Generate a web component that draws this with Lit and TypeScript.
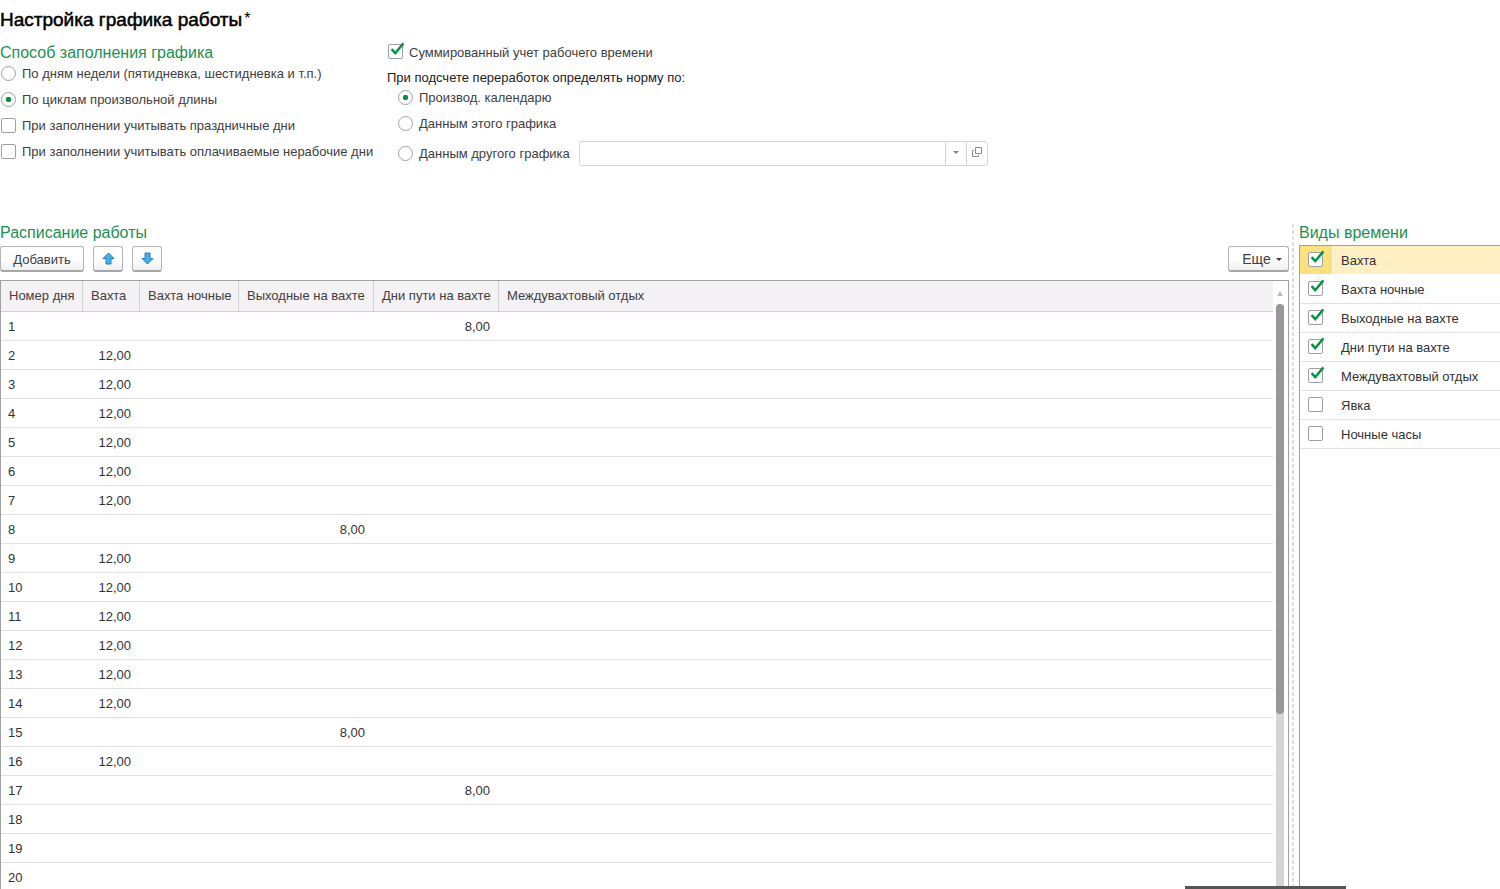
import { LitElement, html, css, svg } from "lit";
import { customElement, property } from "lit/decorators.js";

const controls = css`
  * {
    box-sizing: border-box;
  }
  button,
  input {
    font: inherit;
    color: inherit;
    margin: 0;
  }
`;

@customElement("tick-box")
class TickBox extends LitElement {
  @property({ type: Boolean }) checked = false;
  @property() label = "";
  @property({ type: Boolean }) wide = false;

  static styles = [
    controls,
    css`
      :host {
        display: block;
      }
      .line {
        display: flex;
        align-items: center;
        gap: 6px;
        white-space: nowrap;
      }
      .line.wide {
        gap: 18px;
      }
      .holder {
        position: relative;
        display: flex;
        margin-bottom: 2px;
      }
      .box {
        appearance: none;
        width: 15px;
        height: 15px;
        border: 1px solid #a0a0a0;
        border-radius: 2px;
        background: #fff;
      }
      .mark {
        position: absolute;
        left: 1px;
        top: -2px;
        display: none;
        pointer-events: none;
      }
      .box:checked + .mark {
        display: block;
      }
    `,
  ];

  render() {
    return html`<label class="line ${this.wide ? "wide" : ""}">
      <span class="holder">
        <input class="box" type="checkbox" .checked=${this.checked} />
        <svg class="mark" width="16" height="15" viewBox="0 0 16 15">
          <path d="M2.6 7.2 L6.2 11.2 L14.4 1.4" fill="none" stroke="#009646" stroke-width="2.5" />
        </svg>
      </span>
      <span>${this.label}</span>
    </label>`;
  }
}

interface Day {
  n: number;
  col?: number;
  hours?: string;
}

const COLUMNS = ["Вахта", "Вахта ночные", "Выходные на вахте", "Дни пути на вахте", "Междувахтовый отдых"];

const DAYS: Day[] = Array.from({ length: 20 }, (_, i) => {
  const n = i + 1;
  if (n === 1 || n === 17) return { n, col: 3, hours: "8,00" };
  if (n === 8 || n === 15) return { n, col: 2, hours: "8,00" };
  if (n > 17) return { n };
  return { n, col: 0, hours: "12,00" };
});

const KINDS = [
  { name: "Вахта", on: true },
  { name: "Вахта ночные", on: true },
  { name: "Выходные на вахте", on: true },
  { name: "Дни пути на вахте", on: true },
  { name: "Междувахтовый отдых", on: true },
  { name: "Явка", on: false },
  { name: "Ночные часы", on: false },
];

const arrow = svg`<path d="M6.5 1 L12 6.5 H9 V12 H4 V6.5 H1 Z" fill="#3fb0ec" stroke="#2b7fb4" stroke-width="1" stroke-linejoin="round"/>`;

@customElement("app-root")
class AppRoot extends LitElement {
  static styles = [
    controls,
    css`
      :host {
        display: flex;
        flex-direction: column;
        height: 100vh;
        overflow: hidden;
        background: #fff;
        color: #404040;
        font: 13px/16px "Liberation Sans", Arial, sans-serif;
      }
      h1 {
        display: flex;
        gap: 2px;
        margin: 0;
        padding-top: 9px;
        font-size: 19px;
        line-height: 22px;
        font-weight: 400;
        color: #000;
      }
      .title {
        -webkit-text-stroke: 0.5px #000;
      }
      .star {
        font-size: 16px;
        line-height: 20px;
      }
      h2 {
        margin: 0;
        font-size: 16px;
        line-height: 18px;
        font-weight: 400;
        color: #1a9250;
      }
      .options {
        display: flex;
        flex: none;
        gap: 20px;
        padding: 12px 0 54px;
      }
      .fill {
        width: 367px;
        flex: none;
      }
      .opt {
        display: flex;
        align-items: center;
        height: 26px;
        gap: 6px;
        padding: 2px 0 0 1px;
        white-space: nowrap;
      }
      .fill h2 {
        padding-top: 1px;
        margin-bottom: -2px;
      }
      .radio {
        appearance: none;
        width: 15px;
        height: 15px;
        margin-bottom: 2px;
        border: 1px solid #a0a0a0;
        border-radius: 50%;
        background: #fff;
      }
      .radio:checked {
        background: radial-gradient(circle, #009646 2.5px, #fff 3px);
      }
      .norm {
        flex: 1;
        min-width: 0;
      }
      .total {
        padding: 1px 0 0 1px;
      }
      .caption {
        padding-top: 9px;
        color: #222;
        margin-bottom: -2px;
      }
      .norm .opt {
        padding-left: 11px;
      }
      .norm .other {
        height: 34px;
        gap: 9px;
        padding-top: 0;
      }
      .other label {
        display: flex;
        align-items: center;
        gap: 6px;
        padding-top: 2px;
      }
      .picker {
        display: flex;
        width: 409px;
        height: 25px;
        border: 1px solid #d4d4d4;
        border-radius: 3px;
      }
      .picker input {
        flex: 1;
        min-width: 0;
        border: 0;
        background: none;
      }
      .picker button {
        display: grid;
        place-items: center;
        width: 21px;
        padding: 0 0 2px;
        border: 0;
        border-left: 1px solid #d4d4d4;
        background: none;
      }
      .lower {
        display: flex;
        flex: 1;
        min-height: 0;
      }
      .schedule {
        display: flex;
        flex-direction: column;
        flex: 1;
        min-width: 0;
      }
      .bar {
        display: flex;
        gap: 9px;
        padding: 4px 0 8px;
      }
      .btn {
        display: flex;
        align-items: center;
        justify-content: center;
        height: 26px;
        min-width: 30px;
        padding: 0;
        border: 1px solid #b4b4b4;
        border-bottom: 2px solid #a6a6a6;
        border-radius: 3px;
        background: linear-gradient(#fff 50%, #f0f0f0);
      }
      .add {
        width: 84px;
        padding-top: 2px;
      }
      .more {
        width: 61px;
        margin-left: auto;
        gap: 5px;
        padding: 1px 0 0 7px;
        font-size: 14px;
      }
      .frame {
        display: flex;
        flex: 1;
        min-height: 0;
        border: 1px solid #a0a0a0;
        border-bottom: 0;
        overflow: hidden;
      }
      .rows {
        flex: 1;
        min-width: 0;
        overflow: hidden;
      }
      table {
        width: 100%;
        table-layout: fixed;
        border-collapse: separate;
        border-spacing: 0;
      }
      th,
      td {
        padding: 0 8px;
        text-align: right;
        white-space: nowrap;
        border-bottom: 1px solid #e2e2e2;
      }
      th {
        height: 31px;
        font-weight: 400;
        text-align: left;
        background: #f5f2f5;
        border-bottom-color: #d2d2d2;
        border-right: 1px solid #d2d2d2;
      }
      th:last-child {
        border-right: 0;
      }
      td {
        height: 29px;
        padding: 2px 9px 0;
        color: #333;
      }
      td:first-child {
        text-align: left;
        padding-left: 7px;
      }
      .c0 {
        width: 82px;
      }
      .c1 {
        width: 57px;
      }
      .c2 {
        width: 99px;
      }
      .c3 {
        width: 135px;
      }
      .c4 {
        width: 125px;
      }
      .scroll {
        display: flex;
        flex-direction: column;
        align-items: center;
        width: 15px;
        padding: 10px 1px 0 0;
        gap: 8px;
      }
      .track {
        flex: 1;
        width: 8px;
        background: #d5d5d5;
        border-radius: 4px 4px 0 0;
      }
      .thumb {
        height: 70%;
        border-radius: 4px;
        background: #989698;
      }
      .split {
        width: 10px;
        display: flex;
        padding-left: 3px;
      }
      .dash {
        width: 2px;
        background: repeating-linear-gradient(#dedede 0 4px, transparent 4px 6px);
      }
      .kinds {
        display: flex;
        flex-direction: column;
        width: 201px;
      }
      .kinds ul {
        flex: 1;
        margin: 3px 0 0;
        padding: 0;
        list-style: none;
        border: 1px solid #a0a0a0;
        border-right: 0;
        border-bottom: 0;
      }
      .kinds li {
        height: 29px;
        padding: 6px 0 0 8px;
        color: #333;
        border-bottom: 1px solid #e2e2e2;
      }
      .kinds li.current {
        background: linear-gradient(90deg, #fce27c 32px, #fff8e0 32px 33px, #fff0c3 33px);
        border-bottom-color: #fff;
      }
      .panel {
        position: fixed;
        left: 79%;
        bottom: 0;
        width: 161px;
        height: 3px;
        background: #555;
      }
    `,
  ];

  render() {
    return html`
      <h1><span class="title">Настройка графика работы</span><span class="star">*</span></h1>
      <section class="options">
        <div class="fill">
          <h2>Способ заполнения графика</h2>
          <label class="opt"><input class="radio" type="radio" name="mode" />По дням недели (пятидневка, шестидневка и т.п.)</label>
          <label class="opt"><input class="radio" type="radio" name="mode" checked />По циклам произвольной длины</label>
          <tick-box class="opt" label="При заполнении учитывать праздничные дни"></tick-box>
          <tick-box class="opt" label="При заполнении учитывать оплачиваемые нерабочие дни"></tick-box>
        </div>
        <div class="norm">
          <tick-box class="total" checked label="Суммированный учет рабочего времени"></tick-box>
          <div class="caption">При подсчете переработок определять норму по:</div>
          <label class="opt"><input class="radio" type="radio" name="norm" checked />Производ. календарю</label>
          <label class="opt"><input class="radio" type="radio" name="norm" />Данным этого графика</label>
          <div class="opt other">
            <label><input class="radio" type="radio" name="norm" />Данным другого графика</label>
            <div class="picker">
              <input type="text" aria-label="Данным другого графика" />
              <button aria-label="Выбрать">
                <svg width="6" height="3"><path d="M0 0H6L3 3Z" fill="#888" /></svg>
              </button>
              <button aria-label="Открыть">
                <svg width="10" height="10" fill="none" stroke="#8c8c8c">
                  <path d="M3.5 .5H9.5V6.5H3.5ZM2 3.5H.5V9.5H6.5V8" />
                </svg>
              </button>
            </div>
          </div>
        </div>
      </section>
      <main class="lower">
        <section class="schedule">
          <h2>Расписание работы</h2>
          <div class="bar">
            <button class="btn add">Добавить</button>
            <button class="btn" aria-label="Вверх"><svg width="13" height="13">${arrow}</svg></button>
            <button class="btn" aria-label="Вниз">
              <svg width="13" height="13"><g transform="rotate(180 6.5 6.5)">${arrow}</g></svg>
            </button>
            <button class="btn more">Еще<svg width="6" height="3"><path d="M0 0H6L3 3Z" fill="#404040" /></svg></button>
          </div>
          <div class="frame">
            <div class="rows">
              <table>
                <colgroup>
                  <col class="c0" /><col class="c1" /><col class="c2" /><col class="c3" /><col class="c4" /><col />
                </colgroup>
                <thead>
                  <tr>
                    <th>Номер дня</th>
                    ${COLUMNS.map((c) => html`<th>${c}</th>`)}
                  </tr>
                </thead>
                <tbody>
                  ${DAYS.map(
                    (d) => html`<tr>
                      <td>${d.n}</td>
                      ${COLUMNS.map((_, i) => html`<td>${d.col === i ? d.hours : ""}</td>`)}
                    </tr>`
                  )}
                </tbody>
              </table>
            </div>
            <div class="scroll">
              <svg width="6" height="5"><path d="M0 5L3 0L6 5Z" fill="#bdbdbd" /></svg>
              <div class="track"><div class="thumb"></div></div>
            </div>
          </div>
        </section>
        <div class="split"><div class="dash"></div></div>
        <section class="kinds">
          <h2>Виды времени</h2>
          <ul>
            ${KINDS.map(
              (k, i) => html`<li class=${i === 0 ? "current" : ""}>
                <tick-box wide ?checked=${k.on} label=${k.name}></tick-box>
              </li>`
            )}
          </ul>
        </section>
      </main>
      <div class="panel"></div>
    `;
  }
}
